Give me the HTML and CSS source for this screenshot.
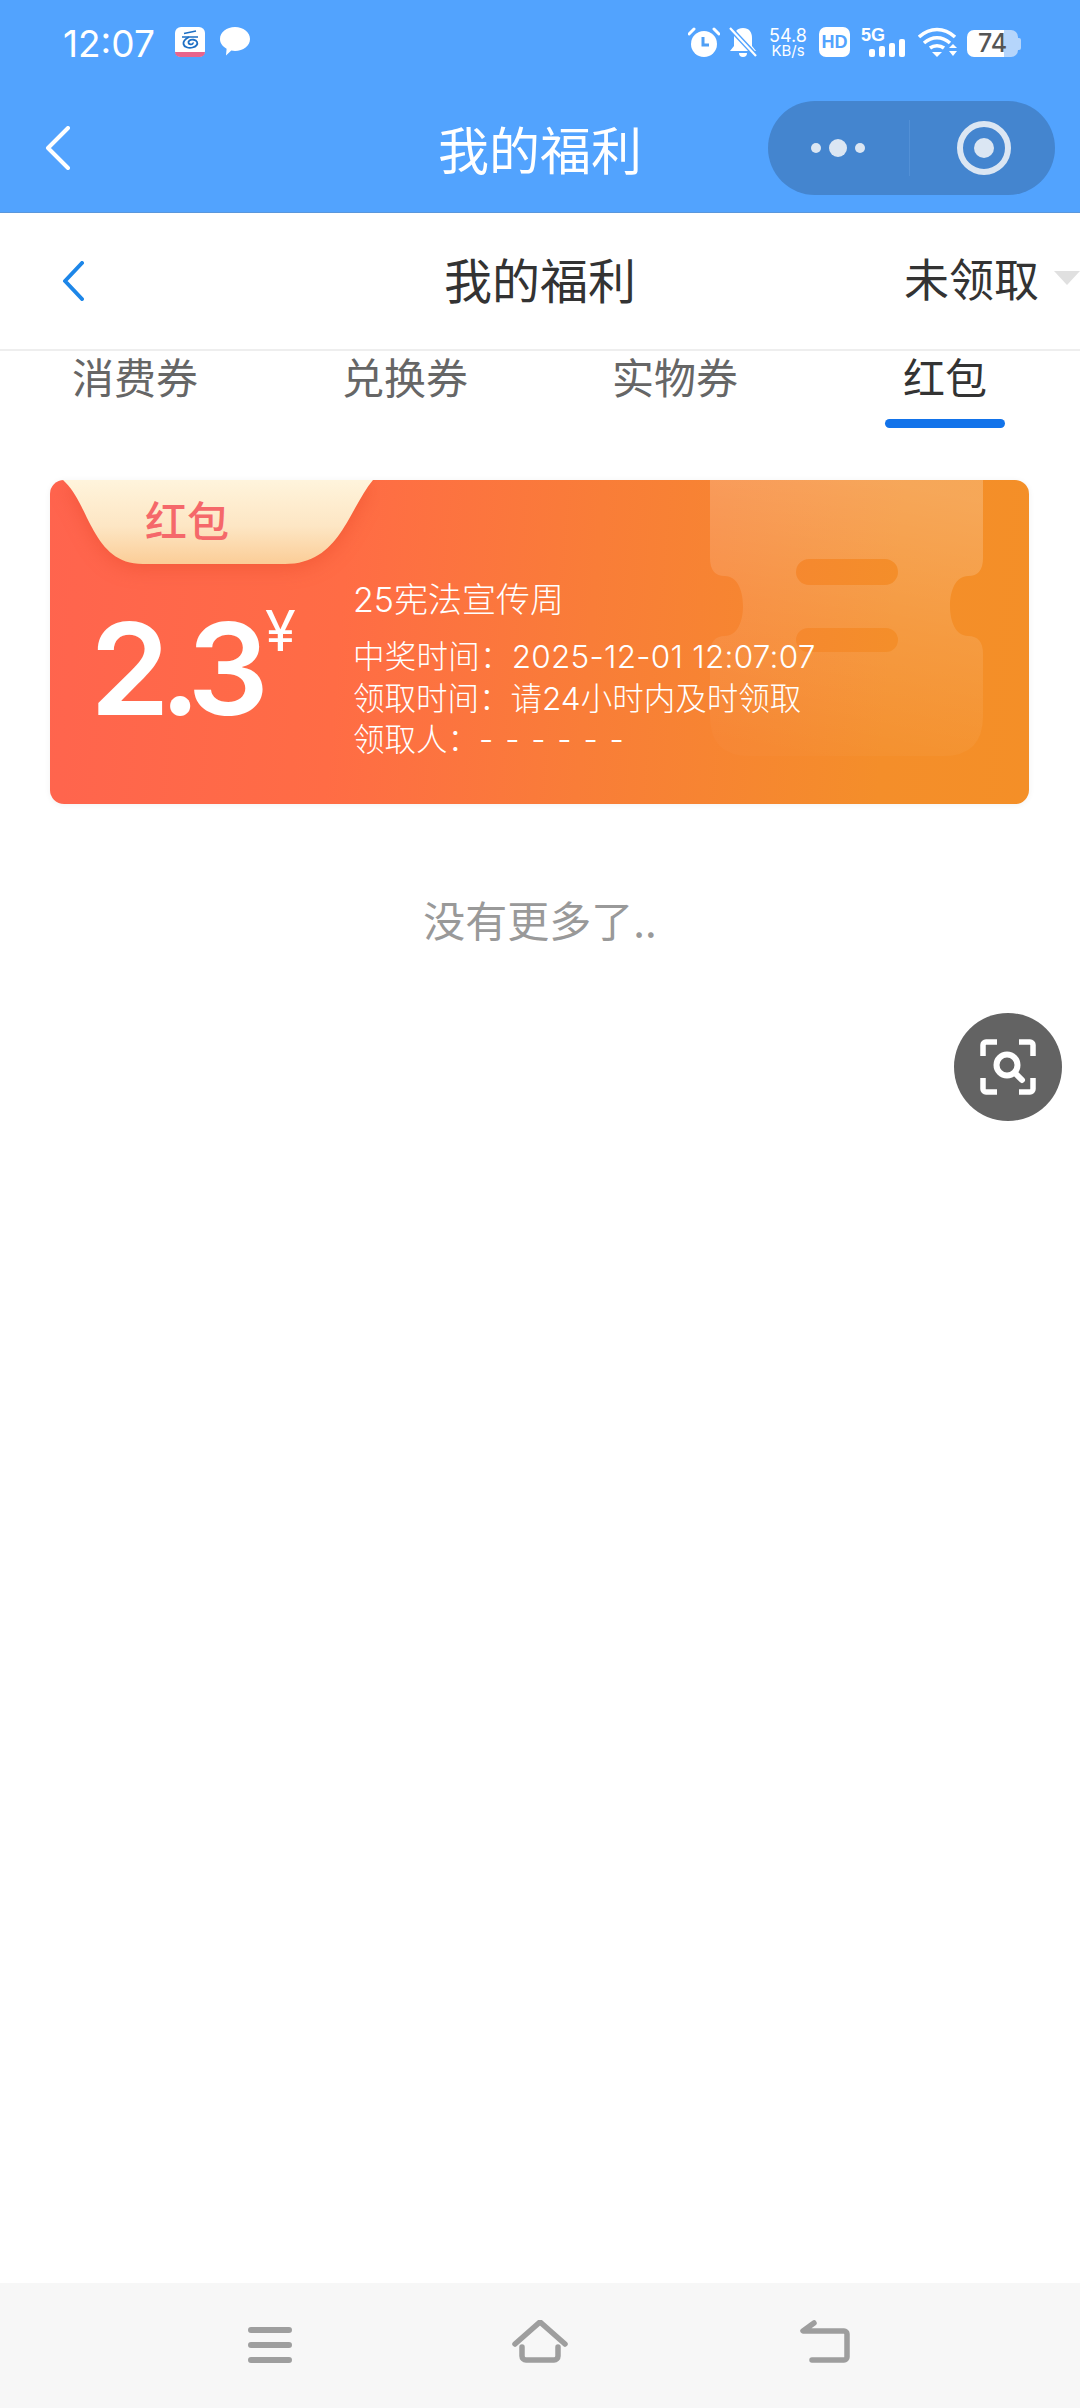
FILE: index.html
```html
<!DOCTYPE html>
<html lang="zh-CN">
<head>
    <meta charset="UTF-8">
    <title>我的福利</title>
    <link rel="stylesheet" href="styles.css">
</head>
<body>
    <div class="phone">
        <header class="header">
            <div class="status-bar">
                <div class="status-left">
                    <span class="time">12:07</span>
                    <svg class="app-icon" width="30" height="30" viewBox="0 0 30 30">
                        <rect width="30" height="30" rx="6" fill="#fff"/>
                        <path d="M0 25h30v0a5 5 0 0 1-5 5H5a5 5 0 0 1-5-5z" fill="#e8648c"/>
                        <path d="M9 6.500l12-2.500M7 10h16" stroke="#1d6fc4" stroke-width="1.600" fill="none"/>
                        <path d="M14 10c-4 2-6 4-5.500 7 .5 3 5 4.500 9 3.500 4-1 5.500-3.500 4.500-5.500-1-2.500-5.500-3-7.500-1.500-2 1.500-1 3.500 1 3.800 1.800.2 2.800-.8 2.300-1.800" stroke="#1d6fc4" stroke-width="1.800" fill="none"/>
                    </svg>
                    <svg class="chat-icon" width="30" height="29" viewBox="0 0 30 29">
                        <path d="M15 0c8.300 0 15 5.300 15 12s-6.700 12-15 12c-1.300 0-2.500-.1-3.700-.4L6 28.500l.6-6.800C2.500 19.500 0 16 0 12 0 5.300 6.700 0 15 0z" fill="#fff"/>
                    </svg>
                </div>
                <div class="status-right">
                    <svg width="32" height="30" viewBox="0 0 32 30">
                        <circle cx="16" cy="17" r="13" fill="#fff"/>
                        <path d="M1 7l5-5M31 7l-5-5" stroke="#fff" stroke-width="3" stroke-linecap="round"/>
                        <path d="M15 10v8h6" stroke="#4f9ff5" stroke-width="3" fill="none"/>
                    </svg>
                    <svg class="bell" width="28" height="30" viewBox="0 0 28 30">
                        <path d="M14 1c6 0 9 4 9 10v8l4 5H1l4-5v-8c0-6 3-10 9-10zM10 26h8a4 4 0 0 1-8 0z" fill="#fff"/>
                        <path d="M1 1l27 29" stroke="#52a3fe" stroke-width="5"/>
                        <path d="M1 1l26 28" stroke="#fff" stroke-width="2.200"/>
                    </svg>
                    <div class="speed">
                        <span class="speed-num">54.8</span>
                        <span class="speed-unit">KB/s</span>
                    </div>
                    <div class="hd">HD</div>
                    <div class="signal">
                        <span class="five-g">5G</span>
                        <svg width="36" height="18" viewBox="0 0 36 18">
                            <rect x="0" y="10" width="6" height="8" rx="2" fill="#fff"/>
                            <rect x="10" y="7" width="6" height="11" rx="2" fill="#fff"/>
                            <rect x="20" y="4" width="6" height="14" rx="2" fill="#fff"/>
                            <rect x="30" y="0" width="6" height="18" rx="2" fill="#fff"/>
                        </svg>
                    </div>
                    <svg class="wifi" width="40" height="30" viewBox="0 0 40 30">
                        <path d="M1 10c11-10 25-10 36 0M6 16c8-7 18-7 26 0M12 21c4-3 10-3 14 0" stroke="#fff" stroke-width="3.600" fill="none"/>
                        <path d="M14 25h10l-5 5z" fill="#fff"/>
                        <path d="M31 21l4-4 4 4zM31 24h8l-4 5z" fill="#fff"/>
                    </svg>
                    <div class="battery">
                        <div class="battery-body">
                            <span class="battery-num">74</span>
                        </div>
                        <div class="battery-cap"></div>
                    </div>
                </div>
            </div>
            <div class="nav-row">
                <svg class="nav-back-arrow" width="25" height="44" viewBox="0 0 25 44">
                    <path d="M23 2L3 22l20 20" stroke="#fff" stroke-width="4" fill="none" stroke-linecap="round" stroke-linejoin="round"/>
                </svg>
                <h1 class="nav-title">我的福利</h1>
                <div class="capsule">
                    <div class="capsule-dots">
                        <span class="dot"></span>
                        <span class="dot dot-big"></span>
                        <span class="dot"></span>
                    </div>
                    <div class="capsule-line"></div>
                    <div class="capsule-ring"><span></span></div>
                </div>
            </div>
        </header>

        <div class="sub-bar">
            <svg class="sub-back-arrow" width="22" height="40" viewBox="0 0 22 40">
                <path d="M20 2L3 20l17 18" stroke="#1d86e8" stroke-width="4" fill="none" stroke-linecap="round" stroke-linejoin="round"/>
            </svg>
            <div class="sub-title">我的福利</div>
            <div class="filter">
                <span>未领取</span>
                <span class="filter-arrow"></span>
            </div>
        </div>

        <div class="tabs">
            <div class="tab">消费券</div>
            <div class="tab">兑换券</div>
            <div class="tab">实物券</div>
            <div class="tab active">红包<span class="tab-line"></span></div>
        </div>

        <div class="card">
            <svg class="card-ticket" width="273" height="276" viewBox="0 0 273 276">
                <defs>
                    <linearGradient id="ticketFill" x1="0.600" y1="0" x2="0.400" y2="1">
                        <stop offset="0" stop-color="#fff" stop-opacity="0.220"/>
                        <stop offset="0.500" stop-color="#fff" stop-opacity="0.110"/>
                        <stop offset="1" stop-color="#fff" stop-opacity="0.020"/>
                    </linearGradient>
                </defs>
                <path fill="url(#ticketFill)" fill-rule="evenodd" d="M0 0H273V78Q273 96 258 96C246 96 240 110 240 126S246 156 258 156Q273 156 273 174V236Q273 276 233 276H40Q0 276 0 236V174Q0 156 15 156C27 156 33 142 33 126S27 96 15 96Q0 96 0 78ZM99 79A13 13 0 0 0 99 105H175A13 13 0 0 0 175 79ZM98 148A12 12 0 0 0 98 172H176A12 12 0 0 0 176 148Z"/>
            </svg>
            <svg class="card-label-bg" width="330" height="110" viewBox="0 0 330 110">
                <defs>
                    <linearGradient id="labelFill" x1="0" y1="0" x2="0" y2="1">
                        <stop offset="0" stop-color="#fff4dc"/>
                        <stop offset="0.550" stop-color="#fde6c4"/>
                        <stop offset="1" stop-color="#fbcd97"/>
                    </linearGradient>
                </defs>
                <path class="label-shape" fill="url(#labelFill)" d="M13 0H323C298 30 290 84 235 84H93C42 84 40 24 13 0Z"/>
            </svg>
            <div class="card-label">红包</div>
            <div class="amount">2.3<span class="yen">¥</span></div>
            <div class="info">
                <div class="info-title">25宪法宣传周</div>
                <div class="info-line info-date">中奖时间：2025-12-01 12:07:07</div>
                <div class="info-line">领取时间：请24小时内及时领取</div>
                <div class="info-line">领取人：<span class="dashes">- - - - - -</span></div>
            </div>
        </div>

        <div class="no-more">没有更多了..</div>

        <div class="fab">
            <svg width="56" height="56" viewBox="0 0 56 56">
                <path d="M3 17V6a3 3 0 0 1 3-3h11M39 3h11a3 3 0 0 1 3 3v11M3 39v11a3 3 0 0 0 3 3h11M39 53h11a3 3 0 0 0 3-3V39" stroke="#fff" stroke-width="5.500" fill="none"/>
                <circle cx="27" cy="26" r="10.500" stroke="#fff" stroke-width="6" fill="none"/>
                <path d="M35 34l7 7" stroke="#fff" stroke-width="6" stroke-linecap="round"/>
            </svg>
        </div>

        <nav class="navbar">
            <svg class="nav-menu" width="44" height="36" viewBox="0 0 44 36">
                <path d="M3 3h38M3 18h38M3 33h38" stroke="#9e9e9e" stroke-width="6" stroke-linecap="round"/>
            </svg>
            <svg class="nav-home" width="56" height="43" viewBox="0 0 56 43">
                <path d="M3 24L28 2l25 22" stroke="#9e9e9e" stroke-width="5.500" fill="none" stroke-linecap="round" stroke-linejoin="round"/>
                <path d="M10 27v9a4 4 0 0 0 4 4h28a4 4 0 0 0 4-4v-9" stroke="#9e9e9e" stroke-width="5.500" fill="none" stroke-linecap="round"/>
            </svg>
            <svg class="nav-back" width="50" height="43" viewBox="0 0 50 43">
                <path d="M14 3L3 11h41a3 3 0 0 1 3 3v23a3 3 0 0 1-3 3H12" stroke="#9e9e9e" stroke-width="5.500" fill="none" stroke-linecap="round" stroke-linejoin="round"/>
            </svg>
        </nav>
    </div>
</body>
</html>
```

FILE: styles.css
```css
* {
    box-sizing: border-box;
}

body {
    margin: 0;
    background-color: #fff;
    font-family: "Noto Sans CJK SC", "Noto Sans", sans-serif;
}

.phone {
    position: relative;
    display: flex;
    flex-direction: column;
    width: 1080px;
    height: 2408px;
    overflow: hidden;
    background-color: #fff;
}

/* blue header */
.header {
    flex: 0 0 213px;
    background-color: #52a3fe;
    border-bottom: 1px solid #5a97dc;
    color: #fff;
}

.status-bar {
    display: flex;
    justify-content: space-between;
    align-items: flex-start;
    height: 80px;
    padding: 27px 59px 0 63px;
}

.status-left,
.status-right {
    display: flex;
    align-items: flex-start;
}

.time {
    font-family: Inter, sans-serif;
    font-size: 37px;
    line-height: 34px;
    margin-right: 20px;
}

.app-icon {
    margin-right: 15px;
}

.bell {
    margin-left: 9px;
}

.speed {
    display: flex;
    flex-direction: column;
    align-items: center;
    width: 38px;
    margin-left: 12px;
    font-family: Inter, sans-serif;
}

.speed-num {
    font-size: 18px;
    line-height: 17px;
}

.speed-unit {
    font-size: 15px;
    line-height: 13px;
}

.hd {
    width: 31px;
    height: 30px;
    margin-left: 12px;
    border-radius: 7px;
    background-color: #fff;
    color: #52a3fe;
    font-family: "Liberation Sans", sans-serif;
    font-size: 18px;
    font-weight: bold;
    line-height: 30px;
    text-align: center;
}

.signal {
    position: relative;
    display: flex;
    align-items: flex-end;
    justify-content: flex-end;
    width: 44px;
    height: 30px;
    margin-left: 11px;
}

.five-g {
    position: absolute;
    left: 0;
    top: -2px;
    font-family: "Liberation Sans", sans-serif;
    font-size: 18px;
    font-weight: bold;
    line-height: 20px;
}

.wifi {
    margin-left: 13px;
}

.battery {
    display: flex;
    align-items: center;
    margin-left: 9px;
    margin-top: 3px;
}

.battery-body {
    width: 51px;
    height: 27px;
    border-radius: 7px;
    background: linear-gradient(to right, #fff 72%, #b5d5fb 72%);
    color: #555;
    font-family: Inter, sans-serif;
    font-size: 25px;
    font-weight: 500;
    line-height: 27px;
    text-align: center;
}

.battery-cap {
    width: 3px;
    height: 12px;
    border-radius: 0 2px 2px 0;
    background-color: #b5d5fb;
}

.nav-row {
    display: grid;
    grid-template-columns: minmax(0, 1fr) auto minmax(0, 1fr);
    align-items: center;
    height: 132px;
    padding-top: 4px;
}

.nav-back-arrow {
    margin-left: 45px;
}

.nav-title {
    margin: 0;
    font-size: 51px;
    font-weight: 400;
    line-height: 70px;
}

.capsule {
    display: flex;
    align-items: center;
    justify-self: end;
    flex-shrink: 0;
    width: 287px;
    height: 94px;
    margin-right: 25px;
    border-radius: 47px;
    background-color: #4485cf;
}

.capsule-dots {
    display: flex;
    align-items: center;
    gap: 8px;
    margin-left: 43px;
}

.dot {
    width: 10px;
    height: 10px;
    border-radius: 50%;
    background-color: #dbe6f3;
}

.dot-big {
    width: 18px;
    height: 18px;
}

.capsule-line {
    width: 1px;
    height: 56px;
    margin-left: 44px;
    background-color: #5290d6;
}

.capsule-ring {
    display: flex;
    align-items: center;
    justify-content: center;
    width: 54px;
    height: 54px;
    margin-left: 47px;
    border: 6px solid #dbe6f3;
    border-radius: 50%;
}

.capsule-ring span {
    width: 20px;
    height: 20px;
    border-radius: 50%;
    background-color: #dbe6f3;
}

/* page title bar */
.sub-bar {
    display: grid;
    grid-template-columns: minmax(0, 1fr) auto minmax(0, 1fr);
    align-items: center;
    flex: 0 0 138px;
    border-bottom: 2px solid #eeeeee;
}

.sub-back-arrow {
    margin-left: 62px;
}

.sub-title {
    padding-bottom: 6px;
    color: #333;
    font-size: 48px;
    line-height: 66px;
}

.filter {
    display: flex;
    align-items: center;
    justify-content: flex-end;
    gap: 15px;
    margin-top: -6px;
    color: #333;
    font-size: 45px;
    line-height: 60px;
}

.filter-arrow {
    width: 0;
    height: 0;
    border-left: 13px solid transparent;
    border-right: 13px solid transparent;
    border-top: 14px solid #e0e0e0;
}

/* tabs */
.tabs {
    display: grid;
    grid-template-columns: repeat(4, 1fr);
    flex: 0 0 79px;
}

.tab {
    display: flex;
    flex-direction: column;
    align-items: center;
    color: #666;
    font-size: 42px;
    line-height: 50px;
}

.tab.active {
    color: #333;
}

.tab-line {
    width: 120px;
    height: 9px;
    margin-top: 18px;
    border-radius: 5px;
    background-color: #1273ea;
}

/* red packet card */
.card {
    position: relative;
    display: flex;
    flex: 0 0 324px;
    margin: 50px 51px 0 50px;
    padding: 95px 0 0 40px;
    border-radius: 14px;
    background: linear-gradient(95deg, #ff644e 0%, #ff6c45 30%, #f97d38 55%, #f48e2a 85%, #f48f27 100%);
    box-shadow: 0 1px 6px rgba(0, 0, 0, 0.06);
    overflow: hidden;
    color: #fff;
}

.card-ticket {
    position: absolute;
    left: 660px;
    top: 0;
}

.card-label-bg {
    position: absolute;
    left: 0;
    top: 0;
}

.label-shape {
    filter: drop-shadow(0 4px 10px rgba(220, 60, 30, 0.35));
}

.card-label {
    position: absolute;
    left: 95px;
    top: 10px;
    color: #f5686a;
    font-size: 42px;
    font-weight: 500;
    line-height: 58px;
}

.amount {
    flex: 0 0 263px;
    margin-top: 30px;
    font-family: Inter, sans-serif;
    font-size: 128px;
    font-weight: 600;
    line-height: 128px;
    letter-spacing: -10px;
}

.yen {
    margin-left: 6px;
    font-size: 56px;
    font-weight: 400;
    line-height: 0;
    letter-spacing: 0;
    vertical-align: 64px;
}

.info {
    position: relative;
}

.info-title {
    margin-bottom: 11px;
    font-family: Inter, "Noto Sans CJK SC", sans-serif;
    font-size: 34px;
    line-height: 50px;
    font-weight: 300;
}

.info-line {
    font-family: Inter, "Noto Sans CJK SC", sans-serif;
    font-size: 31.500px;
    font-weight: 300;
    line-height: 41.500px;
    white-space: nowrap;
}

.info-date {
    letter-spacing: 0.250px;
}

.dashes {
    word-spacing: 3px;
}

.no-more {
    margin-top: 85px;
    color: #999;
    font-size: 42px;
    line-height: 60px;
    text-align: center;
}

/* floating scan button */
.fab {
    position: absolute;
    left: 954px;
    top: 1013px;
    display: flex;
    align-items: center;
    justify-content: center;
    width: 108px;
    height: 108px;
    border-radius: 50%;
    background-color: #636363;
}

/* system nav */
.navbar {
    display: flex;
    align-items: flex-start;
    flex: 0 0 125px;
    margin-top: auto;
    padding: 37px 0 0 248px;
    background-color: #f7f7f7;
}

.nav-menu {
    margin-top: 7px;
}

.nav-home {
    margin-left: 220px;
}

.nav-back {
    margin-left: 232px;
}
```
